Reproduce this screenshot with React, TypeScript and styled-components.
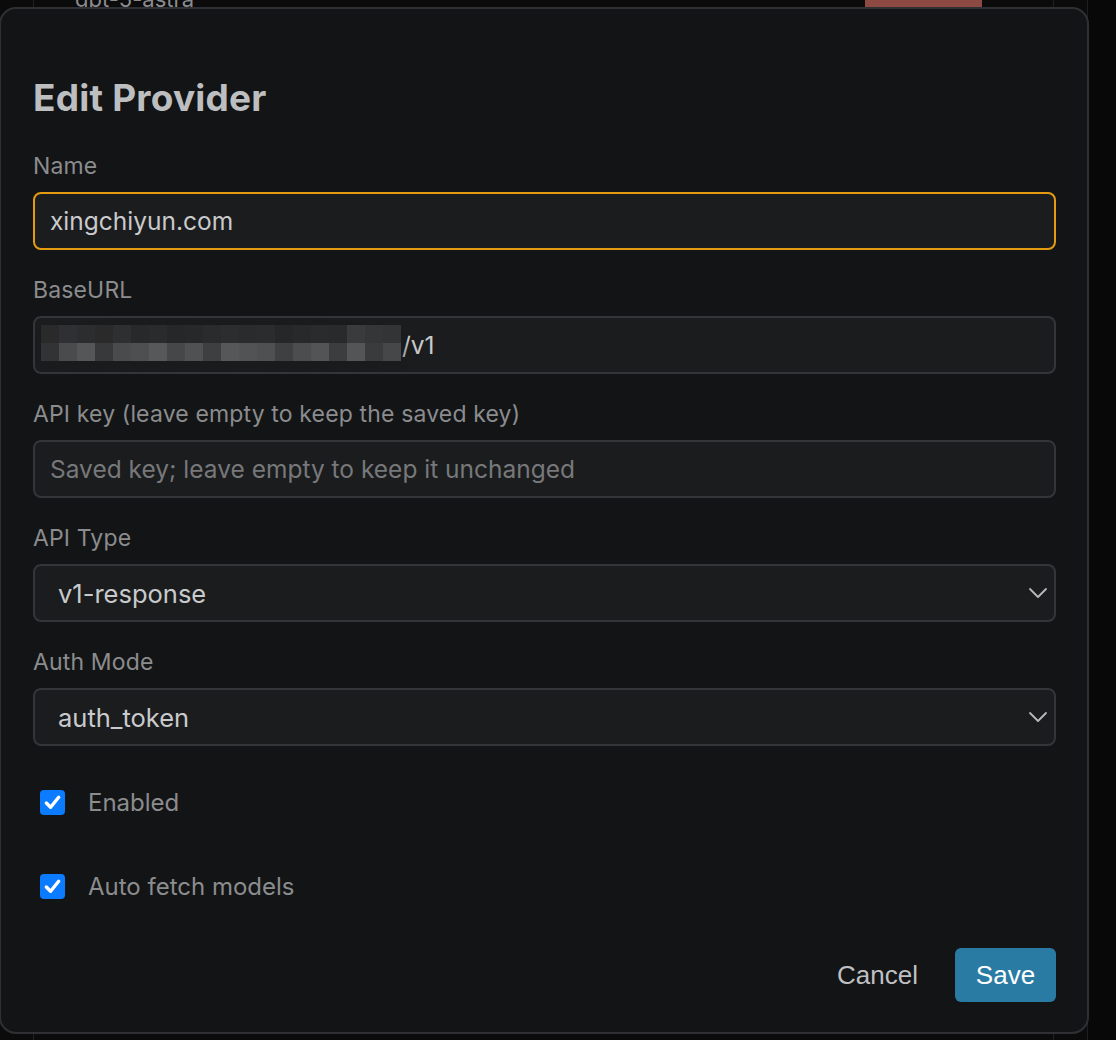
import React from "react";
import styled, { createGlobalStyle } from "styled-components";

const GlobalStyle = createGlobalStyle`
  html, body {
    margin: 0;
    padding: 0;
    background: #0b0b0c;
    height: 100%;
    overflow: hidden;
  }
  body {
    font-family: Inter, "Noto Sans", sans-serif;
  }
`;

// Page behind the modal
const Page = styled.div`
  display: flex;
  height: 1040px;
  background: #0b0b0c;
`;

const Main = styled.div`
  width: 1088px;
  border-right: 1px solid #1d1e20;
  padding: 0 33px;
  box-sizing: border-box;
`;

const SideRail = styled.div`
  flex: 1;
  background: #080808;
`;

const ListCard = styled.div`
  border-left: 1px solid #202123;
  border-right: 1px solid #202123;
  height: 100%;
`;

const ListRow = styled.div`
  display: flex;
  align-items: flex-end;
  justify-content: space-between;
  height: 7px;
  overflow: hidden;
  padding: 0 71px 0 41px;
`;

const RowName = styled.span`
  font-size: 22px;
  line-height: 22px;
  color: #8b8c8e;
  margin-bottom: -3px;
`;

const DeleteButton = styled.div`
  width: 117px;
  height: 7px;
  background: #8c4a42;
`;

// Modal
const Overlay = styled.div`
  position: fixed;
  inset: 0;
  pointer-events: none;
`;

const Dialog = styled.div`
  position: absolute;
  top: 7px;
  left: -1px;
  width: 1090px;
  height: 1027px;
  box-sizing: border-box;
  background: #131416;
  border: 2px solid #2e3033;
  border-radius: 17px;
  padding: 67px 32px 32px 32px;
  display: flex;
  flex-direction: column;
  pointer-events: auto;
`;

const Title = styled.h2`
  margin: 0 0 34px;
  font-size: 37px;
  line-height: 44px;
  font-weight: 700;
  color: #bdbec0;
  letter-spacing: 0.2px;
`;

const Field = styled.div`
  display: flex;
  flex-direction: column;
  gap: 14px;
  margin-bottom: 28px;
  width: 1023px;
`;

const Label = styled.label`
  font-size: 23px;
  line-height: 24px;
  color: #8b8c8e;
  letter-spacing: 0.15px;
`;

const InputShell = styled.div<{ $focused?: boolean }>`
  position: relative;
  height: 58px;
  box-sizing: border-box;
  border-radius: 8px;
  background: #1b1c1e;
  border: ${(p) => (p.$focused ? "2px solid #e39b12" : "2px solid #343538")};
  display: flex;
  align-items: center;
  overflow: hidden;
`;

const TextInput = styled.input<{ $inset?: number; $size?: number }>`
  flex: 1;
  height: 100%;
  border: 0;
  outline: none;
  background: transparent;
  padding: 0 0 0 ${(p) => p.$inset ?? 15}px;
  font-family: Inter, "Noto Sans", sans-serif;
  font-size: ${(p) => p.$size ?? 24.5}px;
  color: #c9cacc;

  &::placeholder {
    color: #77787a;
  }
`;

const Chevron = styled.svg`
  position: absolute;
  right: 6px;
  top: 50%;
  transform: translateY(-50%);
`;

// Pixelated redaction over part of the base URL
const Mosaic = styled.div`
  position: absolute;
  left: 6px;
  top: 7px;
  display: grid;
  grid-template-columns: repeat(20, 18px);
  grid-auto-rows: 18px;
  pointer-events: none;
`;

const Tile = styled.div<{ $c: string }>`
  background: ${(p) => p.$c};
`;

const Smudge = styled.div`
  position: absolute;
  left: -8px;
  top: 10px;
  width: 380px;
  height: 46px;
  border-radius: 50%;
  background: #1a1b1d;
  filter: blur(6px);
  opacity: 0.55;
  pointer-events: none;
`;

const CheckRow = styled.label<{ $gap: number }>`
  display: flex;
  align-items: center;
  gap: 23px;
  margin: ${(p) => p.$gap}px 0 0 7px;
  height: 26px;
  font-size: 24px;
  color: #8b8c8e;
`;

const CheckBox = styled.span`
  width: 25px;
  height: 25px;
  border-radius: 4px;
  background: #0b7bff;
  display: flex;
  align-items: center;
  justify-content: center;
`;

const Footer = styled.div`
  display: flex;
  justify-content: flex-end;
  align-items: center;
  gap: 37px;
  margin-top: 49px;
  width: 1023px;
`;

const GhostButton = styled.button`
  border: 0;
  background: transparent;
  padding: 0;
  font-family: "Liberation Sans", Arial, sans-serif;
  font-size: 26px;
  color: #bfc0c2;
  cursor: pointer;
`;

const PrimaryButton = styled.button`
  width: 101px;
  height: 54px;
  border: 0;
  border-radius: 6px;
  background: #2a7ba3;
  color: #ffffff;
  font-family: "Liberation Sans", Arial, sans-serif;
  font-size: 26px;
  cursor: pointer;
`;

const tilesTop = [
  "#2a2a2b", "#2f3033", "#2c2d2f", "#2a2a2a", "#2e2f31", "#28292b", "#2a2b2d",
  "#262729", "#27282a", "#2a2b2d", "#2c2d2f", "#2a2b2d", "#2b2c2e", "#262729",
  "#28292b", "#2a2b2d", "#292a2c", "#3a3b3d", "#353638", "#333436",
];
const tilesBottom = [
  "#323335", "#4a4b4d", "#555658", "#38393b", "#4a4b4d", "#4e4f51", "#57585a",
  "#464749", "#505153", "#3e3f41", "#565759", "#525355", "#4f5052", "#3f4042",
  "#4c4d4f", "#535456", "#3c3d3f", "#545557", "#3a3b3d", "#464749",
];

function Check() {
  return (
    <svg width="19" height="19" viewBox="0 0 20 20">
      <path
        d="M3.5 10.5 L8 15 L16.5 4.5"
        fill="none"
        stroke="#fff"
        strokeWidth="3.6"
        strokeLinecap="round"
        strokeLinejoin="round"
      />
    </svg>
  );
}

function SelectArrow() {
  return (
    <Chevron width="20" height="12" viewBox="0 0 20 12">
      <path
        d="M2 2 L10 10 L18 2"
        fill="none"
        stroke="#b8b9bb"
        strokeWidth="1.8"
        strokeLinecap="round"
        strokeLinejoin="round"
      />
    </Chevron>
  );
}

export default function App() {
  return (
    <>
      <GlobalStyle />
      <Page>
        <Main>
          <ListCard>
            <ListRow>
              <RowName>gpt-5-astra</RowName>
              <DeleteButton />
            </ListRow>
          </ListCard>
        </Main>
        <SideRail />
      </Page>

      <Overlay>
        <Dialog>
          <Title>Edit Provider</Title>

          <Field>
            <Label>Name</Label>
            <InputShell $focused>
              <TextInput defaultValue="xingchiyun.com" />
            </InputShell>
          </Field>

          <Field>
            <Label>BaseURL</Label>
            <InputShell>
              <TextInput defaultValue="5/v1" $inset={352} />
              <Smudge />
              <Mosaic>
                {tilesTop.concat(tilesBottom).map((c, i) => (
                  <Tile key={i} $c={c} />
                ))}
              </Mosaic>
            </InputShell>
          </Field>

          <Field>
            <Label>API key (leave empty to keep the saved key)</Label>
            <InputShell>
              <TextInput placeholder="Saved key; leave empty to keep it unchanged" />
            </InputShell>
          </Field>

          <Field>
            <Label>API Type</Label>
            <InputShell>
              <TextInput defaultValue="v1-response" $inset={23} $size={25.5} readOnly />
              <SelectArrow />
            </InputShell>
          </Field>

          <Field>
            <Label>Auth Mode</Label>
            <InputShell>
              <TextInput defaultValue="auth_token" $inset={23} $size={25.5} readOnly />
              <SelectArrow />
            </InputShell>
          </Field>

          <CheckRow $gap={15}>
            <CheckBox>
              <Check />
            </CheckBox>
            Enabled
          </CheckRow>

          <CheckRow $gap={58}>
            <CheckBox>
              <Check />
            </CheckBox>
            Auto fetch models
          </CheckRow>

          <Footer>
            <GhostButton>Cancel</GhostButton>
            <PrimaryButton>Save</PrimaryButton>
          </Footer>
        </Dialog>
      </Overlay>
    </>
  );
}
